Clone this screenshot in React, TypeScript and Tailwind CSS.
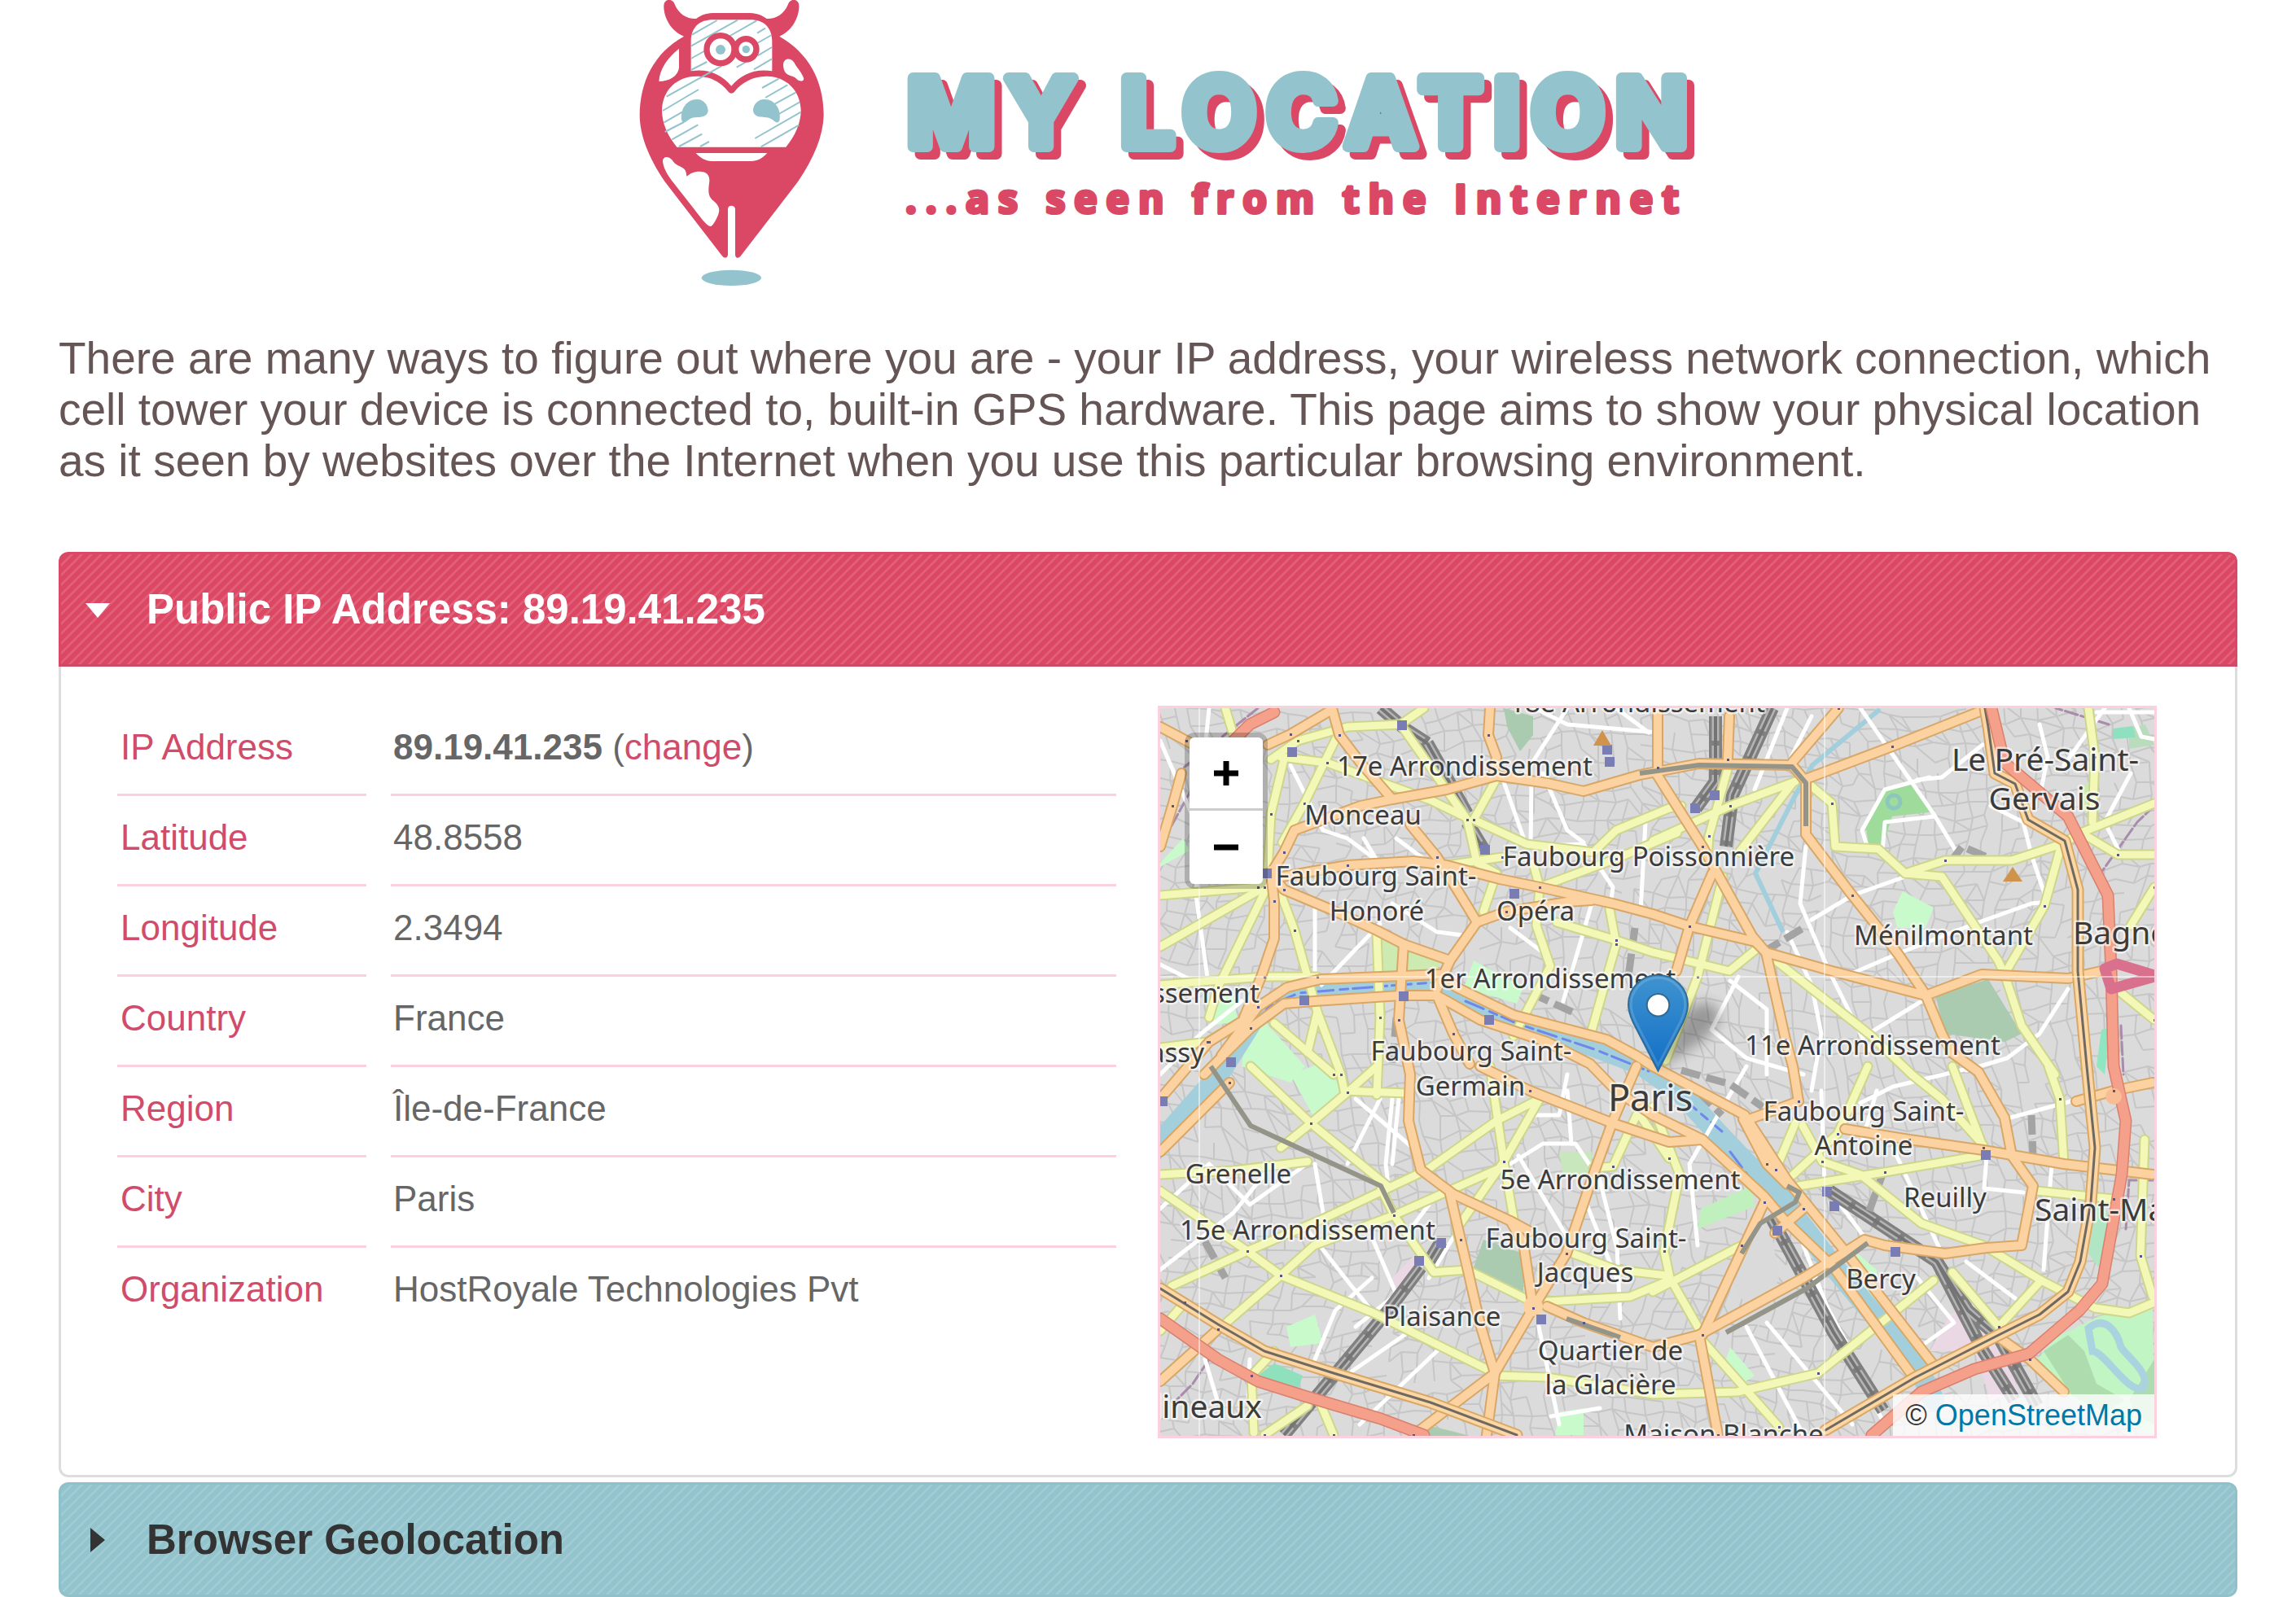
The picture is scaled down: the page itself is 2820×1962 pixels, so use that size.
import React, { useState } from 'react';

const details = [
  { label: 'IP Address', value: '89.19.41.235', change: true },
  { label: 'Latitude', value: '48.8558' },
  { label: 'Longitude', value: '2.3494' },
  { label: 'Country', value: 'France' },
  { label: 'Region', value: 'Île-de-France' },
  { label: 'City', value: 'Paris' },
  { label: 'Organization', value: 'HostRoyale Technologies Pvt' },
];

/* ---------- logo ---------- */

const Mascot = () => (
  <g transform="scale(0.33333)">
    <path
      fill="#db4865"
      d="M240 134C190 115 164 60 166 20C167 -6 200 -8 207 18C222 52 250 70 285 69C302 56 320 49 345 48H485C510 49 528 56 545 69C580 70 608 52 623 18C630 -8 663 -6 664 20C666 60 640 115 592 134C700 195 756 300 755 425C753 500 720 580 660 670L452 940C444 954 429 954 429 938V770C428 754 402 754 402 770V938C401 953 387 953 380 942L170 670C110 580 78 500 77 425C78 300 130 195 240 134Z"
    />
    <path fill="#fff" d="M266 262V150C268 98 300 73 345 73H485C532 73 563 98 565 150V262C500 252 450 275 415 317C380 275 330 252 266 262Z" />
    <path fill="#fff" d="M214 542C180 500 159 455 159 405C162 330 215 282 285 281C345 281 380 308 402 336C410 347 420 347 428 336C450 308 490 281 545 281C615 282 668 330 671 405C671 455 650 500 616 542Z" />
    <g stroke="#93c3cc" strokeWidth="6" fill="none">
      <path d="M270 128L362 75M266 170L438 74M266 216L330 180M410 132L508 76M266 258L325 228M510 122L540 104M505 162L563 129M512 205L564 174M434 248L470 228M498 256L564 217" />
      <path d="M176 356L380 243M162 408L294 330M166 452L235 412M170 486L240 450M196 514L292 460M222 540L307 494M300 540L333 522" />
      <path d="M528 324L590 290M540 360L622 313M575 383L652 341M590 420L667 376M502 510L671 413M524 541L664 461" />
    </g>
    <circle cx="375" cy="182" r="51" fill="#fff" stroke="#db4865" strokeWidth="22" />
    <circle cx="469" cy="181" r="38" fill="#fff" stroke="#db4865" strokeWidth="22" />
    <circle cx="375" cy="183" r="18" fill="#93c3cc" />
    <circle cx="469" cy="182" r="14" fill="#93c3cc" />
    <path fill="#93c3cc" d="M231 440C228 400 250 367 288 366C312 366 328 385 329 408C327 432 302 431 281 433C262 435 257 443 245 451C237 453 232 448 231 440Z" />
    <path fill="#93c3cc" d="M593 440C598 400 575 367 537 366C512 366 495 385 495 408C498 432 523 431 543 433C562 435 567 443 579 451C587 453 592 448 593 440Z" />
    <path fill="#fff" d="M284 564H547C530 584 510 593 488 594H342C320 593 300 582 284 564Z" />
    <path fill="#fff" d="M222 179V250C218 282 185 300 148 300C150 255 178 215 222 179Z" />
    <path fill="#fff" d="M606 240C606 215 632 210 646 230C655 248 676 268 682 290C680 304 662 300 652 288C640 275 608 285 606 240Z" />
    <path fill="#fff" d="M162 595C162 576 182 573 196 589C210 612 226 610 240 622C248 630 249 638 250 650C268 636 280 632 298 632C325 633 335 645 334 668C328 710 330 725 350 741C372 760 374 775 364 797C356 815 348 828 340 834C330 834 322 825 310 812L195 665C180 645 164 620 162 595Z" />
    <ellipse cx="415" cy="1024" rx="110" ry="29" fill="#93c3cc" />
  </g>
);

const Logo = () => (
  <svg viewBox="720 0 1380 352" className="w-[1380px] max-w-full" role="img" aria-label="My Location">
    <g transform="translate(760 0)">
      <Mascot />
    </g>
    <text
      x="1114"
      y="180"
      fill="#93c3cc"
      stroke="#93c3cc"
      strokeWidth="14"
      strokeLinejoin="round"
      className="font-['Inter',sans-serif] text-[116px] font-bold tracking-[14px] drop-shadow-[9px_9px_0_#db4865]"
    >
      MY LOCATION
    </text>
    <text
      x="1112"
      y="262"
      fill="#db4865"
      stroke="#db4865"
      strokeWidth="4"
      strokeLinejoin="round"
      className="font-['Open_Sans',sans-serif] text-[48px] font-bold tracking-[11px]"
    >
      ...as seen from the Internet
    </text>
  </svg>
);

/* ---------- map ---------- */

const primary = [
  '0,23 32,40 60,55', '211,0 220,33 246,67 285,112', '132,45 160,32 209,3', '405,0 403,33 413,60 409,83',
  '136,203 152,177 165,150 246,120 285,112 352,100 413,83 475,92 520,102 589,82 662,68 776,70 793,90 793,153',
  '793,155 850,230 882,270 907,303 940,352 960,400 972,423 1005,447 1037,503 1046,550 1072,587 1058,660 1015,663 964,670',
  '136,203 152,223 209,247 266,273 299,290 356,310', '136,203 140,237 140,283 124,330 103,380',
  '150,207 230,193 311,188 352,193 417,210 466,220 556,240 605,253 650,268 731,287 744,300 825,323 940,353 1009,327 1115,332 1156,323',
  '307,143 340,183 377,243 389,263 356,310 340,345', '389,263 425,250 500,238 530,236',
  '75,427 120,367 156,343 197,333 344,327 364,343 434,377 548,407 585,427 605,440 718,500 770,580 841,667 950,807',
  '54,450 111,393 152,363 189,360 295,353 340,353 393,383 475,410 528,437 560,470 605,500 666,530 742,600 765,627 827,687 926,823',
  '299,290 293,383 307,450 305,507 320,567 360,597 430,630 454,643',
  '356,597 369,653 377,687 393,757 411,817 401,893', '411,817 311,893', '411,817 458,737 446,657 430,630',
  '458,737 499,670 532,573 556,507 585,440', '393,440 454,470 556,510 625,533 666,530', '340,353 360,400 380,437',
  '475,735 520,755 605,785 662,770 790,700 865,653 890,660 964,670', '666,770 742,607', '662,770 685,893',
  '1009,3 899,47 793,87', '776,67 833,0', '699,10 697,63', '611,0 611,73', '609,80 666,170 727,280 744,300',
  '678,203 650,268 634,323', '744,300 768,407 777,440 784,483', '718,507 784,483', '841,517 920,530 1011,543 1110,560 1219,573',
  '1125,483 1171,470 1219,460', '1030,773 1068,800 1110,840', '0,827 71,763', '0,170 15,120 26,80', '0,480 60,410 100,385', '0,545 85,460',
  '716,505 745,560 770,585', '755,645 790,615',
];

const secondary = [
  '80,0 92,40', '136,63 169,40 230,23 295,20 324,0', '295,20 377,137 389,190 413,203 397,250', '218,33 177,117 150,165',
  '148,60 205,67 332,113 373,133', '152,63 136,130 132,200', '413,87 385,137 450,167 532,177 560,150 625,123 640,120',
  '605,163 700,120 780,90', '635,153 560,185 466,220', '352,193 420,183', '458,190 466,220 462,267 479,317 434,403',
  '552,247 560,290 528,403', '487,263 560,285 605,300 699,323 731,297', '691,207 660,330 621,433', '776,93 711,177', '697,75 674,157 672,185',
  '793,90 825,117 829,170 882,173 915,203 960,207 1029,310 1037,327 1058,390 1099,450', '973,440 1011,540',
  '1037,327 1086,243 1107,167 1131,153 1221,117', '915,203 964,187 1046,187 1107,167 1131,153', '1131,153 1176,180 1221,180',
  '1140,0 1148,60 1145,140', '1192,267 1221,220', '1172,343 1221,383', '752,307 874,403 923,450 960,480 1011,537',
  '869,440 832,523 770,580', '780,510 756,567', '789,513 813,557 860,573 935,633 1011,660 1082,703 1148,737 1190,743 1221,730',
  '784,587 890,570 1006,550', '1091,440 1105,480 1110,560', '1077,593 1171,603', '1209,530 1204,673 1219,723', '1082,703 1030,760 973,693',
  '950,703 808,817 709,840 605,843 475,822 411,820', '605,717 714,660', '666,777 760,883', '626,700 666,770', '626,700 619,667 638,573 605,490',
  '0,230 120,220 136,205', '0,293 128,220', '136,210 71,343 60,380', '144,217 165,273 193,373 181,423', '128,330 193,330',
  '0,417 58,410 91,390', '0,340 128,330', '266,277 270,380 266,475', '193,373 222,450 226,470 303,473', '140,387 213,450', '266,440 230,472 185,510 148,540',
  '111,440 185,510 279,587', '0,573 90,568 181,557', '0,593 107,667 148,697 262,743 411,817', '14,710 107,667 201,627 328,567 413,507 466,480',
  '79,757 148,697 189,660 287,623 422,563', '405,440 422,557 364,640 369,660', '466,480 422,557 434,627',
  '271,590 287,623 336,693 377,690 458,730 577,723 625,703', '507,670 560,690 622,697', '181,857 128,893', '115,890 112,820 140,790',
  '585,500 556,563 532,565', '589,500 625,553', '0,765 30,730', '195,850 213,893',
];

const white = [
  '60,0 48,120 44,230 60,345', '0,40 60,180', '160,70 200,150 230,160 290,205', '250,160 268,190', '290,160 330,190', '190,240 190,330', '270,265 198,340',
  '285,240 340,275 380,280', '420,85 450,170 520,167 556,220 552,250', '456,85 455,170', '470,80 500,150 520,165', '500,0 455,70', '560,0 600,30',
  '596,140 590,250', '530,240 495,360', '430,270 470,300', '460,0 500,20 611,30', '770,0 730,100', '800,10 770,70', '860,0 950,130 980,180', '793,170 786,240 820,320 870,420',
  '930,88 960,85 1010,45', '945,85 890,100 862,150 870,175', '887,175 890,140 950,133', '800,260 850,230 915,207', '840,330 910,300 1000,265 1070,240 1090,238',
  '1020,120 1060,140 1070,180 1090,240', '1080,20 1090,60 1082,100', '1160,0 1110,70', '1221,5 1150,5', '1190,0 1205,35 1221,38', '1192,80 1160,140 1180,180',
  '770,275 800,340 812,400 800,470', '700,335 745,370 745,450', '710,330 677,395 720,430 790,450', '870,400 940,357', '1115,345 1080,400 1040,430 990,445',
  '860,485 900,465 1004,440', '1037,505 1148,475', '812,470 816,590', '720,440 650,560 660,660', '0,615 60,560 110,610 180,560', '190,560 200,620', '270,480 230,560',
  '285,480 277,560 280,585', '293,480 285,560', '240,480 310,540', '180,640 235,710 260,740', '260,650 290,720 240,760', '190,800 215,740 260,700',
  '330,610 300,650', '360,650 330,700', '235,815 300,770', '245,880 345,785', '465,760 490,880', '480,870 540,860', '560,640 565,750', '520,600 560,700',
  '440,550 500,650', '430,560 470,535 510,535 540,580 560,660', '454,500 490,500 500,450', '500,470 505,535', '0,450 50,400 100,360', '0,315 60,345',
  '720,760 790,893', '745,755 850,880', '790,660 840,790', '760,640 890,880', '870,830 800,700', '930,700 975,755 940,780', '990,680 1050,725', '1015,550 1012,590 1060,595', '1095,560 1085,690',
  '900,540 960,670', '860,540 880,470', '828,600 865,650', '55,800 70,850', '110,800 108,845', '0,690 90,620 130,570',
];

const green: [string, string][] = [
  ['870,170 866,140 891,100 923,90 952,127 899,133 887,170', '#9fdc9c'],
  ['952,353 1017,333 1058,400 1037,410 964,400', '#aacbaf'],
  ['422,0 458,10 458,33 442,53 426,23', '#aacbaf'],
  ['397,653 446,670 446,717 385,687', '#aacbaf'],
  ['1153,747 1219,733 1221,893 1120,850 1077,800 1101,773', '#c2f5c4'],
  ['1085,790 1115,770 1135,790 1150,830 1185,850 1160,865 1120,845', '#aedcae'],
  ['1190,850 1221,800 1221,880 1200,870', '#aedcae'],
  ['271,280 344,310 340,323 275,327', '#cdebb0'],
  ['160,450 200,435 226,472 190,505', '#c8facc'],
  ['104,405 124,380 178,440 160,460 100,440', '#c8facc'],
  ['385,310 446,343 438,363 373,343', '#c8facc'],
  ['664,615 726,587 730,612 660,640', '#c0f0bd'],
  ['57,360 90,350 95,385 62,390', '#c8facc'],
  ['900,250 912,225 950,245 940,270 905,270', '#c8facc'],
  ['845,660 880,690 880,740 850,700', '#c8facc'],
  ['155,760 190,745 200,780 160,785', '#c8facc'],
  ['700,785 730,820 715,830 695,800', '#c8facc'],
  ['1150,605 1165,620 1155,690 1140,670', '#b0e6c4'],
  ['0,190 28,160 36,175 0,195', '#c8facc'],
  ['1190,25 1210,20 1221,45 1190,50', '#b9dcbc'],
  ['490,545 530,545 530,575 495,575', '#c9e7bc'],
  ['1130,100 1142,90 1145,130 1130,125', '#cdebb0'],
  ['120,820 140,805 175,820 170,835', '#8fe0bd'],
  ['1156,395 1166,393 1160,450 1150,440', '#8fe6c1'],
  ['1170,25 1195,22 1198,36 1170,38', '#8fe0c0'],
  ['324,880 365,890 380,894 330,894', '#aacbaf'],
  ['490,865 520,860 520,893 485,893', '#c8facc'],
];

const purple = ['60,60 0,170', '120,0 70,40 20,80', '60,800 40,830 20,850', '1219,580 1190,580 1186,640', '1150,210 1200,140 1221,120', '1165,20 1100,0', '1180,390 1183,450'];

const rails = [
  '320,687 280,740 230,800 152,893', '271,0 300,25 328,43', '328,43 377,130', '377,140 397,173', '682,10 682,90 658,123', '752,0 703,107 695,170',
  '822,593 954,680 992,740 1030,773 1077,857', '954,680 1011,790 1049,850', '751,627 780,680 827,767 888,863', '345,655 330,680',
];

const halls = [
  '290,380 285,440', '455,350 510,375', '583,270 575,330', '660,470 690,500', '55,655 80,700', '890,565 870,620', '1070,500 1072,550',
  '970,190 985,170 1020,185', '740,300 790,270', '640,445 700,462 740,490', '720,500 760,560',
];

const tunnels = [
  '62,440 111,513 271,587 287,620', '589,80 662,70 776,72 793,92 793,145', '695,767 794,713 869,657', '714,670 737,633 780,607 785,595 770,587', '499,750 565,773',
];

const river = '-20,560 0,533 67,457 99,407 120,373 160,350 230,343 340,340 373,357 434,383 536,417 589,437 640,473 680,517 714,553 761,600 822,680 931,810 950,850';

const outerRoads = [
  '0,713 71,757 128,790 213,817 332,853 438,893',
  '817,887 926,823 1030,770 1080,745 1115,717 1130,680 1143,607 1148,540 1138,440 1127,323 1127,223 1111,163 1066,137 1050,93 1025,80 1017,23 1013,0',
];

const ringRoads = [
  '0,750 71,800 120,827 177,845 271,873 324,893',
  '874,893 935,840 1000,812 1067,793 1129,740 1157,707 1181,573 1186,507 1171,440 1168,323 1164,230 1115,133 1037,67 1021,0',
  '90,40 110,20 140,5',
];

const stations = [
  [162, 54], [297, 21], [399, 174], [435, 228], [131, 203], [299, 354], [177, 359], [404, 383], [87, 435], [549, 51], [552, 66],
  [657, 123], [681, 107], [318, 679], [345, 657], [468, 751], [3, 483], [1014, 549], [819, 594], [828, 612], [758, 642], [903, 668],
];

const labels: [string, number, number, number, ('start' | 'middle' | 'end')?][] = [
  ['18e Arrondissement', 586, 5, 33], ['17e Arrondissement', 374, 83, 33], ['Monceau', 249, 143, 33], ['Faubourg Poissonnière', 600, 194, 33],
  ['Faubourg Saint-', 265, 218, 33], ['Honoré', 266, 261, 33], ['Opéra', 461, 261, 33], ['1er Arrondissement', 479, 344, 33],
  ['16e Arrondissement', 122, 362, 33, 'end'], ['Passy', 54, 435, 33, 'end'], ['Faubourg Saint-', 382, 433, 33], ['Germain', 381, 476, 33],
  ['Paris', 602, 495, 45], ['Le Pré-Saint-', 1087, 77, 39], ['Gervais', 1086, 125, 39], ['Ménilmontant', 962, 291, 33],
  ['Bagnolet', 1121, 290, 39, 'start'], ['11e Arrondissement', 875, 426, 33], ['Faubourg Saint-', 864, 507, 33], ['Antoine', 864, 549, 33],
  ['Reuilly', 964, 613, 33], ['Saint-Mandé', 1074, 630, 39, 'start'], ['Bercy', 885, 713, 33], ['Grenelle', 96, 584, 33],
  ['15e Arrondissement', 181, 653, 33], ['5e Arrondissement', 565, 591, 33], ['Faubourg Saint-', 523, 663, 33], ['Jacques', 522, 705, 33],
  ['Plaisance', 346, 759, 33], ['Quartier de', 553, 801, 33], ['la Glacière', 553, 843, 33], ['Moulineaux', 125, 872, 39, 'end'],
  ['Maison Blanche', 692, 904, 33],
];

// small streets: a jittered mesh with a fixed seed
const buildStreets = () => {
  let seed = 7;
  const rand = () => {
    seed = (seed * 16807) % 2147483647;
    return seed / 2147483647;
  };
  const step = 20;
  const cols = 66;
  const rows = 50;
  const pts: number[][][] = [];
  for (let r = 0; r < rows; r++) {
    pts.push([]);
    for (let c = 0; c < cols; c++) {
      const bend = Math.sin(c / 6) * 18 + Math.cos(r / 5) * 14;
      pts[r].push([Math.round(c * step - 30 + Math.sin(r / 4) * 22 + rand() * 10), Math.round(r * step - 30 + bend + rand() * 10)]);
    }
  }
  let d = '';
  for (let r = 0; r < rows - 1; r++) {
    for (let c = 0; c < cols - 1; c++) {
      const [x, y] = pts[r][c];
      if (rand() < 0.78) d += `M${x} ${y}L${pts[r][c + 1].join(' ')}`;
      if (rand() < 0.78) d += `M${x} ${y}L${pts[r + 1][c].join(' ')}`;
      if (rand() < 0.18) d += `M${x} ${y}L${pts[r + 1][c + 1].join(' ')}`;
    }
  }
  return d;
};

const streets = buildStreets();

interface LinesProps extends React.SVGProps<SVGGElement> {
  lines: string[];
}

const Lines = ({ lines, ...props }: LinesProps) => (
  <g fill="none" strokeLinejoin="round" strokeLinecap="round" {...props}>
    {lines.map((points) => (
      <polyline key={points} points={points} />
    ))}
  </g>
);

const MapTiles = () => (
  <svg viewBox="0 0 1221 894" preserveAspectRatio="xMidYMid slice" className="block h-full w-full" role="img" aria-label="Map of Paris">
    <defs>
      <linearGradient id="pin" x1="0" y1="0" x2="0" y2="1">
        <stop offset="0" stopColor="#3f93cf" />
        <stop offset="1" stopColor="#126fc6" />
      </linearGradient>
      <filter id="soft" x="-50%" y="-50%" width="200%" height="200%">
        <feGaussianBlur stdDeviation="8" />
      </filter>
    </defs>
    <rect width="1221" height="894" fill="#dbdbdb" />
    <path d={streets} stroke="#c6c6c6" strokeWidth="2" fill="none" />
    {green.map(([points, fill]) => (
      <polygon key={points} points={points} fill={fill} />
    ))}
    <path d="M722 630L748 625L760 700L735 760L705 710Z" fill="#dadada" />
    <path d="M970 745L1010 725L1055 840L1020 850L1000 790L945 790Z" fill="#ead8e4" />
    <path d="M285 700L312 672L318 690L285 735Z" fill="#ead8e4" />
    <path d="M1140 762C1160 745 1175 765 1180 785C1190 800 1215 815 1208 835C1190 845 1160 790 1145 790Z" fill="none" stroke="#aad3df" strokeWidth="9" />
    <circle cx="901" cy="115" r="8" fill="none" stroke="#8cc7bd" strokeWidth="5" />
    <Lines lines={purple} stroke="#a98bab" strokeWidth="3" strokeDasharray="16 4" />
    <Lines lines={['882,3 801,70 780,107 731,203 764,273']} stroke="#a3cfdc" strokeWidth="6" />
    <Lines lines={[river]} stroke="#a3cfdc" strokeWidth="26" />
    <Lines lines={['110,395 135,365 170,350 230,345 335,337', '375,360 440,388 536,420 600,446', '640,478 690,520', '700,545 730,585 750,610']} stroke="#6f86ea" strokeWidth="3" strokeDasharray="24 8 10 6" />
    <Lines lines={white} stroke="#fff" strokeWidth="5" />
    <Lines lines={rails} stroke="#808080" strokeWidth="16" strokeLinecap="butt" />
    <Lines lines={rails} stroke="#b4b4b4" strokeWidth="9" strokeDasharray="30 6" strokeLinecap="butt" />
    <Lines lines={rails} stroke="#747474" strokeWidth="4" strokeLinecap="butt" />
    <Lines lines={halls} stroke="#a3a3a3" strokeWidth="9" strokeDasharray="24 8" strokeLinecap="butt" />
    <Lines lines={secondary} stroke="#ced58c" strokeWidth="13" />
    <Lines lines={secondary} stroke="#f3f8b6" strokeWidth="9" />
    <Lines lines={primary} stroke="#d8a768" strokeWidth="14" />
    <Lines lines={primary} stroke="#fcd3a0" strokeWidth="10" />
    <Lines lines={outerRoads} stroke="#d9a865" strokeWidth="15" />
    <Lines lines={outerRoads} stroke="#fcd6a4" strokeWidth="11" />
    <Lines lines={outerRoads} stroke="#6f6a60" strokeWidth="3" />
    <Lines lines={ringRoads} stroke="#d9806f" strokeWidth="15" />
    <Lines lines={ringRoads} stroke="#f4a08a" strokeWidth="12" />
    <Lines lines={['1221,328 1175,314 1160,320 1168,345 1221,330']} stroke="#d9708e" strokeWidth="13" />
    <Lines lines={tunnels} stroke="#949489" strokeWidth="6" strokeLinecap="butt" />
    <circle cx="136" cy="203" r="9" fill="#fcd3a0" />
    <circle cx="458" cy="735" r="12" fill="#fcd3a0" />
    <circle cx="1171" cy="477" r="10" fill="#f8bd94" />
    {[...primary, ...secondary].map((points, i) => {
      const [x, y] = points.split(' ')[1].split(',').map(Number);
      return <rect key={i} x={x - 1} y={y - 1} width="3" height="3" fill="#5a5585" />;
    })}
    {stations.map(([x, y]) => (
      <rect key={`${x}-${y}`} x={x - 6} y={y - 6} width="12" height="12" fill="#7a7db3" />
    ))}
    <path d="M543 27L554 46H532Z" fill="#cf934c" />
    <path d="M1047 195L1059 213H1035Z" fill="#cf934c" />
    <path d="M48 0V894M816 0V894M0 330H1221" stroke="#fff" strokeWidth="1" />
    <g fill="#3b3b3b" stroke="#ffffff" strokeOpacity="0.65" strokeWidth="5" strokeLinejoin="round" paintOrder="stroke" className="font-['Noto_Sans',sans-serif]">
      {labels.map(([text, x, y, size, anchor = 'middle'], i) => (
        <text key={i} x={x} y={y} fontSize={size} textAnchor={anchor}>
          {text}
        </text>
      ))}
    </g>
    <path d="M611 444L640 380C660 350 695 360 685 388C670 410 640 425 611 444Z" fill="#000" opacity="0.3" filter="url(#soft)" />
    <g transform="translate(574 327) scale(3)">
      <path d="M12.5 0.3C5.6 0.3 0.3 5.8 0.3 12.4C0.3 15 1.3 17.6 2.3 19.8L12.5 39.6L22.7 19.8C23.7 17.6 24.7 15 24.7 12.4C24.7 5.8 19.4 0.3 12.5 0.3Z" fill="url(#pin)" stroke="#2e6c97" strokeWidth="0.6" />
      <path d="M12.5 1.4C6.2 1.4 1.4 6.4 1.4 12.4C1.4 15 2.4 17.4 3.3 19.4L12.5 37.2L21.7 19.4C22.6 17.4 23.6 15 23.6 12.4C23.6 6.4 18.8 1.4 12.5 1.4Z" fill="none" stroke="#fff" strokeOpacity="0.15" strokeWidth="1" />
      <circle cx="12.5" cy="12.6" r="4.6" fill="#fff" stroke="#2e6c97" strokeWidth="0.7" />
    </g>
  </svg>
);

const MapView = () => (
  <div className="relative h-[900px] overflow-hidden border-[3px] border-[#fcd0dc] bg-[#ddd]">
    <MapTiles />
    <div className="absolute left-[30px] top-[30px] overflow-hidden rounded-xl border-[6px] border-black/20 bg-clip-padding">
      <button type="button" aria-label="Zoom in" className="flex size-[90px] items-center justify-center border-b-[3px] border-[#ccc] bg-white">
        <svg viewBox="0 0 30 30" className="size-[30px]" fill="none" stroke="#000" strokeWidth="7">
          <path d="M0 15H30M15 0V30" />
        </svg>
      </button>
      <button type="button" aria-label="Zoom out" className="flex size-[90px] items-center justify-center bg-white">
        <svg viewBox="0 0 30 30" className="size-[30px]" fill="none" stroke="#000" strokeWidth="7">
          <path d="M0 15H30" />
        </svg>
      </button>
    </div>
    <div className="absolute bottom-0 right-0 bg-white/80 px-[15px] text-[36px] leading-[51px] text-[#333]">
      © <a href="#osm" className="text-[#0078a8]">OpenStreetMap</a>
    </div>
  </div>
);

/* ---------- page ---------- */

const DetailsTable = () => (
  <table className="w-full border-collapse text-[44px] leading-[54px] text-[#666]">
    <tbody>
      {details.map((row, i) => {
        const line = i < details.length - 1 ? 'border-b-[3px] border-[#fcd0dc]' : '';
        return (
          <tr key={row.label}>
            <th scope="row" className="w-[306px] p-0 text-left font-normal text-[#d14b6a]">
              <div className={`whitespace-nowrap px-1 pb-[30px] pt-6 ${line}`}>{row.label}</div>
            </th>
            <td className="p-0 pl-[30px]">
              <div className={`px-[3px] pb-[30px] pt-6 ${line}`}>
                {row.change ? (
                  <>
                    <b>{row.value}</b> (<a href="#change" className="text-[#d14b6a]">change</a>)
                  </>
                ) : (
                  row.value
                )}
              </div>
            </td>
          </tr>
        );
      })}
    </tbody>
  </table>
);

interface SectionHeaderProps {
  title: string;
  open: boolean;
  onToggle: () => void;
}

const stripes =
  'bg-[linear-gradient(135deg,rgba(255,255,255,0.13)_14%,transparent_14%,transparent_50%,rgba(255,255,255,0.13)_50%,rgba(255,255,255,0.13)_64%,transparent_64%)] bg-[length:12px_12px]';

const SectionHeader = ({ title, open, onToggle }: SectionHeaderProps) => (
  <h2>
    <button
      type="button"
      aria-expanded={open}
      onClick={onToggle}
      className={`flex w-full items-center gap-[45px] border-[3px] py-9 pl-[30px] text-left text-[51px] font-bold leading-[63px] ${stripes} ${
        open ? 'rounded-t-xl border-[#db4865] border-b-[#cf4a66] bg-[#dc4764] text-white' : 'rounded-xl border-[#8fc1cb] bg-[#93c3cc] text-[#333]'
      }`}
    >
      <svg viewBox="0 0 30 30" className="size-[30px] fill-current" aria-hidden="true">
        <path d={open ? 'M0 7H30L15 25Z' : 'M6 0L24 15L6 30Z'} />
      </svg>
      {title}
    </button>
  </h2>
);

export default function App() {
  const [open, setOpen] = useState({ ip: true, geo: false });

  return (
    <div className="bg-white px-[72px] font-['Liberation_Sans',Arial,sans-serif]">
      <header className="flex justify-center">
        <Logo />
      </header>
      <p className="pt-[57px] text-[55px] leading-[63px] text-[#665555]">
        There are many ways to figure out where you are - your IP address, your wireless network connection, which cell tower your device is
        connected to, built-in GPS hardware. This page aims to show your physical location as it seen by websites over the Internet when you
        use this particular browsing environment.
      </p>
      <main className="flex flex-col gap-[6px] pt-20">
        <section>
          <SectionHeader title="Public IP Address: 89.19.41.235" open={open.ip} onToggle={() => setOpen({ ...open, ip: !open.ip })} />
          {open.ip && (
            <div className="grid grid-cols-2 items-start gap-[51px] rounded-b-xl border-[3px] border-t-0 border-[#ddd] pb-[45px] pl-[69px] pr-24 pt-12">
              <DetailsTable />
              <MapView />
            </div>
          )}
        </section>
        <section>
          <SectionHeader title="Browser Geolocation" open={open.geo} onToggle={() => setOpen({ ...open, geo: !open.geo })} />
        </section>
      </main>
    </div>
  );
}
